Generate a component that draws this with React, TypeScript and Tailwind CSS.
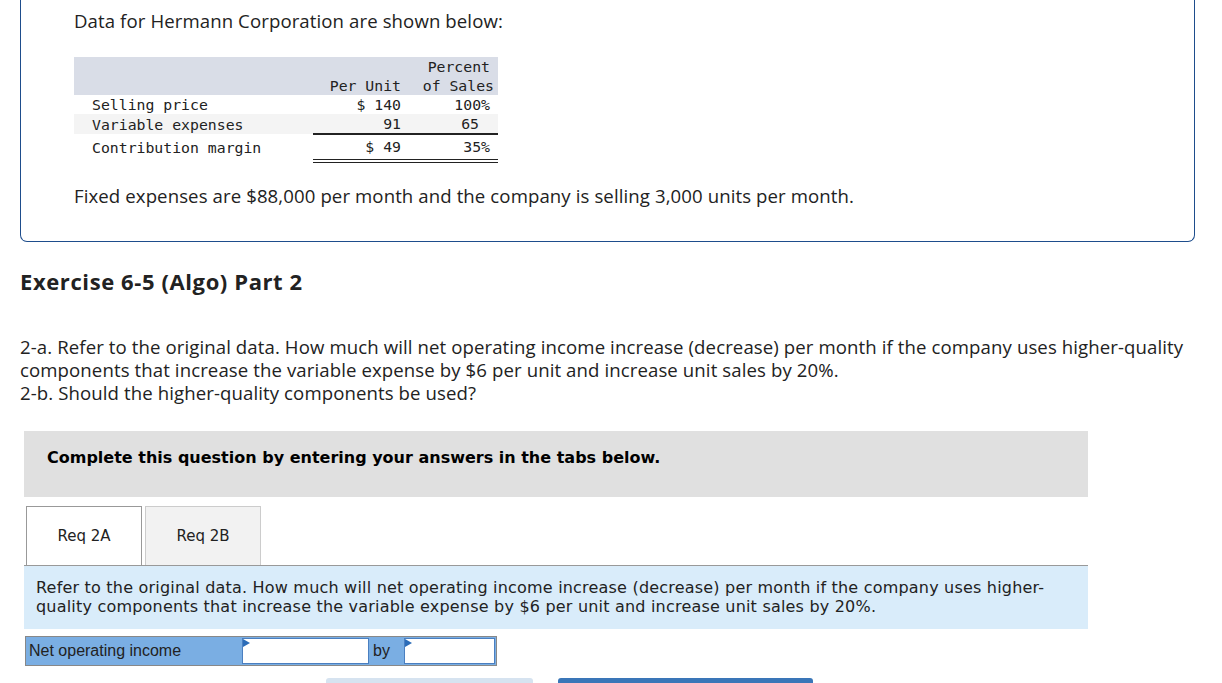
import React from 'react';

const sans = "font-['Open_Sans','Lato',sans-serif]";
const mono = "font-['DejaVu_Sans_Mono','Liberation_Mono',monospace]";
const verdana = "font-['DejaVu_Sans','Verdana',sans-serif]";

function DataTable() {
  return (
    <table className={`${mono} text-[14.8px] text-[#222] border-collapse w-[424px]`}>
      <thead>
        <tr className="bg-[#d9dde7] leading-[19px]">
          <th className="w-[239px]" />
          <th className="w-[88px] align-bottom text-right font-normal">Per Unit</th>
          <th className="w-[20px]" />
          <th className="align-bottom text-right font-normal pr-[4px]">
            <div className="pr-[4px]">Percent</div>
            <div>of Sales</div>
          </th>
        </tr>
      </thead>
      <tbody>
        <tr className="leading-[19px]">
          <td className="pl-[18px]">Selling price</td>
          <td className="text-right">$ 140</td>
          <td />
          <td className="text-right pr-[8px]">100%</td>
        </tr>
        <tr className="bg-[#f4f4f4] leading-[19px]">
          <td className="pl-[18px]">Variable expenses</td>
          <td className="text-right border-b-2 border-[#222]">91</td>
          <td className="border-b-2 border-[#222]" />
          <td className="text-right pr-[19px] border-b-2 border-[#222]">65</td>
        </tr>
        <tr className="leading-[24px]">
          <td className="pl-[18px]">Contribution margin</td>
          <td className="text-right border-b-[4px] border-double border-[#222]">$ 49</td>
          <td className="border-b-[4px] border-double border-[#222]" />
          <td className="text-right pr-[8px] border-b-[4px] border-double border-[#222]">35%</td>
        </tr>
      </tbody>
    </table>
  );
}

export default function App() {
  return (
    <div className={`${sans} bg-white w-[1222px] h-[683px] overflow-hidden text-[#222]`}>
      <div className="ml-[20px] w-[1175px] border-x border-b border-[#1e4d8c] rounded-b-[7px] pl-[53px] pt-[9px] pb-[33px]">
        <p className="text-[18.6px] tracking-[0.1px] leading-[24px]">Data for Hermann Corporation are shown below:</p>
        <div className="mt-[24px]">
          <DataTable />
        </div>
        <p className="mt-[21px] text-[18.6px] tracking-[0.1px] leading-[24px]">
          Fixed expenses are $88,000 per month and the company is selling 3,000 units per month.
        </p>
      </div>

      <h2 className="ml-[20px] mt-[25px] text-[22px] tracking-[0.6px] font-bold leading-[28px]">Exercise 6-5 (Algo) Part 2</h2>

      <div className="ml-[20px] mt-[40px] text-[18.6px] tracking-[0.1px] leading-[23px]">
        <p>
          2-a. Refer to the original data. How much will net operating income increase (decrease) per month if the company uses higher-quality
          <br />
          components that increase the variable expense by $6 per unit and increase unit sales by 20%.
        </p>
        <p>2-b. Should the higher-quality components be used?</p>
      </div>

      <div className={`${verdana} ml-[24px] mt-[27px] w-[1064px] h-[66px] bg-[#e0e0e0] pl-[23px] pt-[16px]`}>
        <p className="text-[16px] font-bold leading-[22px] text-black">Complete this question by entering your answers in the tabs below.</p>
      </div>

      <div className={`${verdana} ml-[24px] mt-[9px] w-[1064px]`}>
        <div className="flex gap-[3px] pl-[2px] border-b border-[#999]">
          <div className="w-[116px] h-[59px] border border-b-0 border-[#999] bg-white flex items-center justify-center text-[15px] -mb-px relative z-10">
            Req 2A
          </div>
          <div className="w-[116px] h-[59px] border border-b-0 border-[#ccc] bg-[#f2f2f2] flex items-center justify-center text-[15px]">
            Req 2B
          </div>
        </div>
        <div className="bg-[#d9ecfa] h-[63px] pl-[12px] pt-[12px] text-[16px] tracking-[0.2px] leading-[19px] text-[#222]">
          Refer to the original data. How much will net operating income increase (decrease) per month if the company uses higher-
          <br />
          quality components that increase the variable expense by $6 per unit and increase unit sales by 20%.
        </div>
      </div>

      <div className="ml-[25px] mt-[7px] flex w-[472px] h-[30px] border border-[#888] bg-[#7aaee3] font-['Liberation_Sans','Arial',sans-serif] text-[16px] text-[#222]">
        <div className="w-[216px] flex items-center pl-[3px]">Net operating income</div>
        <div className="relative w-[127px] my-[1px] bg-white border border-[#4a7fc0]">
          <svg className="absolute left-0 top-0" width="7" height="8" viewBox="0 0 7 8">
            <polygon points="0,0 7,4 0,8" fill="#2b6cb8" />
          </svg>
        </div>
        <div className="w-[35px] flex items-center pl-[4px]">by</div>
        <div className="relative flex-1 my-[1px] mr-[1px] bg-white border border-[#4a7fc0]">
          <svg className="absolute left-0 top-0" width="7" height="8" viewBox="0 0 7 8">
            <polygon points="0,0 7,4 0,8" fill="#2b6cb8" />
          </svg>
        </div>
      </div>

      <div className="flex ml-[326px] mt-[12px] gap-[25px]">
        <div className="w-[207px] h-[10px] bg-[#d6e3f0] rounded-t-[3px]" />
        <div className="w-[255px] h-[10px] bg-[#3a76b8] rounded-t-[3px]" />
      </div>
    </div>
  );
}
